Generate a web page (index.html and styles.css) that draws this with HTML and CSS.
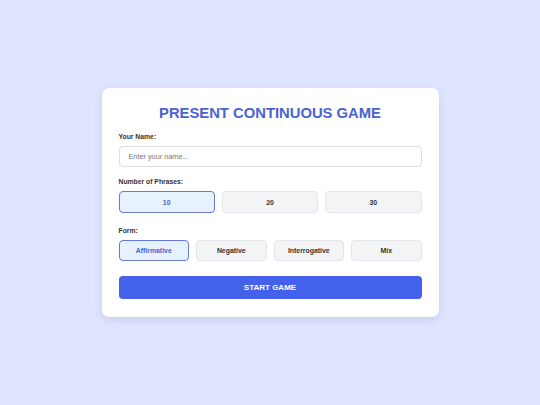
FILE: index.html
```html
<!DOCTYPE html>
<html>
<head>
<meta charset="utf-8">
<link rel="stylesheet" href="styles.css">
</head>
<body>
<div class="card">
  <h1 class="title">PRESENT CONTINUOUS GAME</h1>
  <div class="group g1">
    <div class="label">Your Name:</div>
    <div class="input">Enter your name...</div>
  </div>
  <div class="group g2">
    <div class="label">Number of Phrases:</div>
    <div class="row three">
      <div class="opt active">10</div>
      <div class="opt">20</div>
      <div class="opt">30</div>
    </div>
  </div>
  <div class="group g3">
    <div class="label">Form:</div>
    <div class="row four">
      <div class="opt active">Affirmative</div>
      <div class="opt">Negative</div>
      <div class="opt">Interrogative</div>
      <div class="opt">Mix</div>
    </div>
  </div>
  <div class="start">START GAME</div>
</div>
</body>
</html>
```

FILE: styles.css
```css
html, body { margin: 0; padding: 0; }
body {
  background: #e0e5ff;
  font-family: "Liberation Sans", Arial, sans-serif;
  min-height: 405px;
  display: flex;
  align-items: center;
  justify-content: center;
}
.card {
  width: 303px;
  background: #fff;
  border-radius: 7px;
  padding: 16px 17px 18px;
  box-shadow: 0 3px 10px rgba(60, 70, 140, 0.15);
}
.title {
  margin: 0 0 10px;
  text-align: center;
  font-size: 14.8px;
  line-height: 18px;
  font-weight: bold;
  color: #4a63d4;
}
.label {
  font-size: 6.8px;
  line-height: 10px;
  font-weight: bold;
  color: #333;
  margin-bottom: 4px;
}
.g1 { margin-bottom: 10px; }
.g2 { margin-bottom: 13px; }
.g3 { margin-bottom: 15px; }
.input {
  box-sizing: border-box;
  height: 21px;
  border: 1px solid #dcdde3;
  border-radius: 4px;
  padding: 0 9px;
  display: flex;
  align-items: center;
  font-size: 7.3px;
  color: #777;
}
.row { display: grid; gap: 7px; }
.three { grid-template-columns: 1fr 1fr 1fr; }
.four { grid-template-columns: 1fr 1fr 1fr 1fr; }
.opt {
  box-sizing: border-box;
  height: 21.5px;
  display: flex;
  align-items: center;
  justify-content: center;
  background: #f3f4f6;
  border: 1px solid #e3e5ea;
  border-radius: 4px;
  font-size: 6.9px;
  font-weight: bold;
  color: #333;
}
.opt.active {
  background: #e8f1fe;
  border-color: #6479dc;
  color: #4a63d4;
}
.start {
  height: 22.5px;
  background: #4361ea;
  border-radius: 4px;
  color: #fff;
  font-weight: bold;
  font-size: 8px;
  display: flex;
  align-items: center;
  justify-content: center;
}
```
